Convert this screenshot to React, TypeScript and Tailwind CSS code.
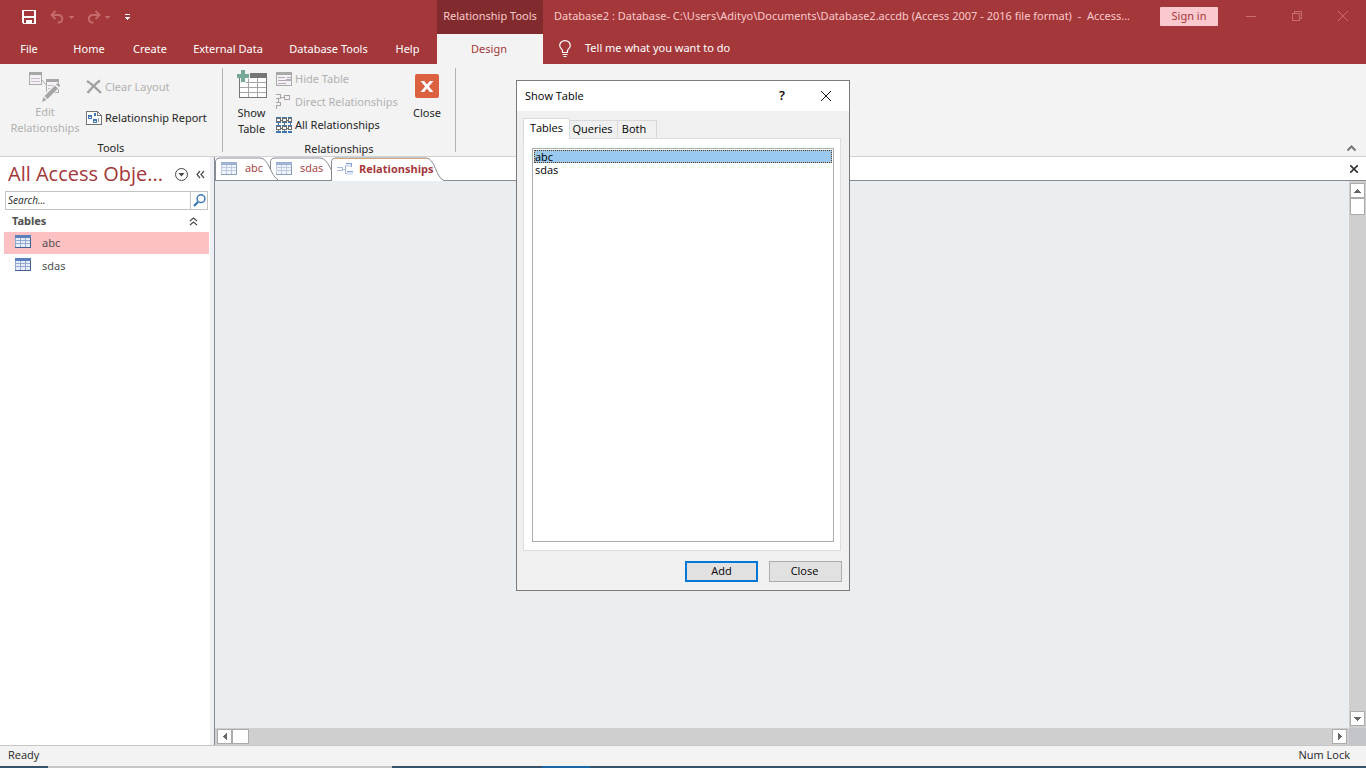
import React, { useState } from 'react';
import { clsx } from 'clsx';

const MENU = [
  { label: 'File', width: 'w-[58px]' },
  { label: 'Home', width: 'w-[62px]' },
  { label: 'Create', width: 'w-[60px]' },
  { label: 'External Data', width: 'w-[96px]' },
  { label: 'Database Tools', width: 'w-[105px]' },
  { label: 'Help', width: 'w-[53px]' },
];

const OBJECTS = ['abc', 'sdas'];

/* ---------- icons ---------- */

function SaveIcon() {
  return (
    <svg width="14" height="14" viewBox="0 0 14 14" shapeRendering="crispEdges">
      <path fillRule="evenodd" fill="#fff" d="M0 0h14v14H1l-1-1zM2 1v5h10V1zM2 8v5h2v-3h6v3h2V8z" />
      <path d="M6 12h2v2H6z" fill="#fff" />
    </svg>
  );
}

function UndoIcon({ flip = false }: { flip?: boolean }) {
  return (
    <svg width="15" height="14" viewBox="0 0 15 14" fill="none" stroke="#c4686b" strokeWidth="2" className={clsx(flip && '-scale-x-100')}>
      <path d="M5.500 1L1.500 5l4 4M2 5h7a3.800 3.800 0 0 1 0 7.500H7.500" />
    </svg>
  );
}

function Caret({ color = '#c4686b' }: { color?: string }) {
  return (
    <svg width="5" height="3" viewBox="0 0 5 3" fill={color} shapeRendering="crispEdges">
      <path d="M0 0h5v1H4v1H3v1H2V2H1V1H0z" />
    </svg>
  );
}

function BulbIcon() {
  return (
    <svg width="12" height="17" viewBox="0 0 12 17" fill="none" stroke="#fff">
      <path d="M3.500 12.500V10.500C3 9 .7 8 .7 5.500a5.300 4.900 0 0 1 10.600 0c0 2.500-2.300 3.500-2.800 5v2z" strokeWidth="1.200" />
      <path d="M3.500 14.500h5M4.500 16.500h3" />
    </svg>
  );
}

function EditRelationshipsIcon() {
  return (
    <svg width="32" height="32" viewBox="0 0 32 32" shapeRendering="crispEdges">
      <path d="M.5 1.500h12v11H.5zM17.500 8.500h12v12h-12z" fill="#f5f0f5" stroke="#ababab" />
      <path d="M0 0h13v3H0zM17 7h13v3H17z" fill="#a6a6a6" />
      <path d="M2 6h9M2 9h9M19 13h7M19 16h4" stroke="#c8bcc8" />
      <path d="M13 8l5 6" stroke="#a6a6a6" shapeRendering="auto" />
      <g shapeRendering="auto">
        <path d="M12 30l2-7L27 11l5 4-13 12z" fill="#f2f2f2" />
        <path d="M13 30l1.500-5 3 3zM15.500 24L26 13.500l3 3L18.500 27zM27 12.500l1-1q2-.5 3 1.500v1l-1 1z" fill="#a6a6a6" />
      </g>
    </svg>
  );
}

function ClearIcon() {
  return (
    <svg width="16" height="16" viewBox="0 0 16 16" fill="none" stroke="#a3a3a3" strokeWidth="2.400">
      <path d="M1 2c5 3 9 7 14 12M14 1.500C9 5 5 10 1.500 14" />
    </svg>
  );
}

function ReportIcon() {
  return (
    <svg width="16" height="14" viewBox="0 0 16 14" shapeRendering="crispEdges">
      <path d="M.5.5h11l4 4v9H.5z" fill="#fff" stroke="#737373" />
      <path d="M11.500.5v4h4" fill="none" stroke="#737373" />
      <path d="M2.500 4.500h3v3h-3zM7.500 8.500h3v3h-3z" fill="none" stroke="#3f77b5" />
      <path d="M2 4h4v2H2zM7 8h4v2H7zM8 2h2v3H8z" fill="#3f77b5" />
      <path d="M12.500 7v4" stroke="#9a9a9a" />
    </svg>
  );
}

function ShowTableIcon() {
  return (
    <svg width="30" height="29" viewBox="0 0 30 29" shapeRendering="crispEdges">
      <path d="M2.500 4.500h27v23h-27z" fill="#fff" stroke="#767676" />
      <path d="M12 3h18v5H12z" fill="#767676" />
      <path d="M3 12.500h26M3 17.500h26M3 22.500h26M11.500 8v19M20.500 8v19" stroke="#a5a5a5" />
      <path d="M3 0h6v3h4v6H9v4H3z" fill="#f2f2f2" />
      <path d="M4 0h4v4h4v4H8v4H4V8H0V4h4z" fill="#76a797" />
    </svg>
  );
}

function HideTableIcon() {
  return (
    <svg width="16" height="14" viewBox="0 0 16 14" shapeRendering="crispEdges">
      <path d="M.5.5h15v13H.5z" fill="#f5f0f5" stroke="#a9a9a9" />
      <path d="M0 0h16v3H0z" fill="#a9a9a9" />
      <path d="M2 5.500h7M2 8.500h9M2 11.500h8M11 5.500h5" stroke="#b4a9b4" />
      <path d="M10 7h6v2h-6z" fill="#b0b0b0" />
    </svg>
  );
}

function DirectIcon() {
  return (
    <svg width="15" height="15" viewBox="0 0 15 15" fill="none" stroke="#aaa4aa" shapeRendering="crispEdges">
      <path d="M0 .5h5M4.500 0v4M0 4.500h5M8.500 1.500h5v4h-5zM5 3.500h3M0 8.500h5M4.500 8v4M0 11.500h5M.5 11v4M2.500 5v3" />
    </svg>
  );
}

function AllRelationshipsIcon() {
  return (
    <svg width="16" height="16" viewBox="0 0 16 16" fill="none" shapeRendering="crispEdges">
      <path d="M.5 1.500h4v3h-4zM6.500 1.500h4v3h-4zM12.500 1.500h3v3h-3zM.5 9.500h4v3h-4zM6.500 9.500h4v3h-4zM12.500 9.500h3v3h-3z" fill="#fff" stroke="#6e6e6e" />
      <path d="M5 3.500h1M11 3.500h1M5 11.500h1M11 11.500h1M2.500 5v4M8.500 5v4M14.500 5v4M2.500 13v3M8.500 13v3" stroke="#6e6e6e" />
      <path d="M0 0h5v1H0zM6 0h5v1H6zM12 0h4v1h-4zM0 5h5v1H0zM6 5h5v1H6zM12 5h4v1h-4zM0 8h5v1H0zM6 8h5v1H6zM12 8h4v1h-4zM0 14h5v2H0zM6 14h5v2H6zM12 14h4v2h-4z" fill="#3f77b5" />
    </svg>
  );
}

function CloseDesignIcon() {
  return (
    <svg width="24" height="24" viewBox="0 0 24 24">
      <rect width="24" height="24" rx="2" fill="#dc6141" />
      <path d="M5.500 7h3.700l2.800 3.500L14.800 7h3.700l-4.600 5.500 4.600 5.500h-3.700L12 14.500 9.200 18H5.500l4.600-5.500z" fill="#fff" />
    </svg>
  );
}

function TableIcon({ faded = false }: { faded?: boolean }) {
  return (
    <svg width="16" height="13" viewBox="0 0 16 13" shapeRendering="crispEdges" className={clsx(faded && 'opacity-60')}>
      <path d="M0 0h16v13H0z" fill="#41608f" />
      <path d="M0 0h15v12H0z" fill="#93a9d0" />
      <path d="M0 0h16v3H0z" fill="#5b80bb" />
      <path d="M1 3h4v2H1zM6 3h4v2H6zM11 3h4v2h-4zM1 6h4v2H1zM6 6h4v2H6zM11 6h4v2h-4zM1 9h4v3H1zM6 9h4v3H6zM11 9h4v3h-4z" fill="#e6edf9" />
    </svg>
  );
}

function RelationshipsIcon() {
  return (
    <svg width="16" height="14" viewBox="0 0 16 14" fill="none" shapeRendering="crispEdges">
      <path d="M0 5.500h5v3H0M5 7h3M8 3v8M8 3.500h2M8 11.500h2" stroke="#a9bce0" />
      <path d="M9 1h6v4H9zM10 9h6v4h-6z" fill="#dbe5f7" />
      <path d="M9 1h6v1H9zM10 9h6v1h-6zM14 1h1v4h-1z" fill="#86a2d6" />
    </svg>
  );
}

function DoubleChevron({ up = false }: { up?: boolean }) {
  return (
    <svg width="9" height="9" viewBox="0 0 9 9" fill="none" stroke="#4a4a4a" strokeWidth="1.200" className={clsx(up && 'rotate-90')}>
      <path d="M4 1L1 4.500 4 8M8 1L5 4.500 8 8" />
    </svg>
  );
}

function Cross({ size, color, weight = 1 }: { size: number; color: string; weight?: number }) {
  return (
    <svg width={size} height={size} viewBox="0 0 10 10" fill="none" stroke={color} strokeWidth={weight}>
      <path d="M0 0l10 10M10 0L0 10" />
    </svg>
  );
}

/* ---------- header ---------- */

function Header() {
  return (
    <header className="flex h-16 shrink-0 bg-[#a4373a] text-[11px] text-white">
      <div className="flex w-[437px] shrink-0 flex-col">
        <div className="flex h-[34px] items-center pl-[22px]">
          <button aria-label="Save"><SaveIcon /></button>
          <button aria-label="Undo" className="ml-[14px] flex items-center gap-1"><UndoIcon /><Caret /></button>
          <button aria-label="Redo" className="ml-3 flex items-center gap-1"><UndoIcon flip /><Caret /></button>
          <button aria-label="Customize" className="ml-[15px] flex flex-col gap-0.5">
            <span className="h-px w-[5px] bg-white" />
            <Caret color="#fff" />
          </button>
        </div>
        <nav className="flex h-[30px]">
          {MENU.map((m) => (
            <button key={m.label} className={clsx('shrink-0 whitespace-nowrap text-center', m.width)}>
              {m.label}
            </button>
          ))}
        </nav>
      </div>
      <div className="flex w-[106px] shrink-0 flex-col text-center">
        <div className="h-[34px] whitespace-nowrap bg-[#822b2e] leading-8 text-[#fbcaca]">Relationship Tools</div>
        <button className="h-[30px] bg-[#f3f3f3] pr-0.5 text-[#a4373a]">Design</button>
      </div>
      <div className="flex min-w-0 flex-1 flex-col">
        <div className="flex h-8 items-center pl-[11px] text-[#fbcaca]">
          <h1 className="w-[592px] shrink-0 whitespace-pre">
            Database2 : Database- C:\Users\Adityo\Documents\Database2.accdb (Access 2007 - 2016 file format)  -  Access...
          </h1>
          <div className="ml-auto flex items-center pr-[18px]">
            <button className="mr-7 h-[19px] w-[58px] rounded-[1px] bg-[#fac8cd] text-[#a4373a]">Sign in</button>
            <button aria-label="Minimize" className="h-px w-[10px] bg-[#c96c70]" />
            <button aria-label="Restore" className="ml-9">
              <svg width="10" height="10" viewBox="0 0 10 10" fill="none" stroke="#c96c70" shapeRendering="crispEdges">
                <path d="M.5 2.500h7v7h-7zM2.500 2V.5h7v7H8" />
              </svg>
            </button>
            <button aria-label="Close window" className="ml-9"><Cross size={10} color="#c96c70" /></button>
          </div>
        </div>
        <button className="flex h-8 items-center gap-[14px] pl-4">
          <BulbIcon />
          Tell me what you want to do
        </button>
      </div>
    </header>
  );
}

/* ---------- ribbon ---------- */

function SmallCommand({ icon, label, disabled = false }: { icon: React.ReactNode; label: string; disabled?: boolean }) {
  return (
    <button disabled={disabled} className={clsx('flex h-[23px] items-center gap-[3px] whitespace-nowrap', disabled ? 'text-[#b1b1b1]' : 'text-[#262626]')}>
      <span className="flex w-4">{icon}</span>
      {label}
    </button>
  );
}

function Ribbon() {
  return (
    <section className="flex h-[93px] shrink-0 border-b border-[#d2d2d2] bg-[#f3f3f3] text-[11px] leading-4 text-[#262626]">
      <div className="my-1 flex w-[223px] shrink-0 flex-col border-r border-[#b2b2b2]">
        <div className="flex h-[72px]">
          <button disabled className="flex w-[76px] flex-col items-center pl-[14px] pt-1 text-[#b1b1b1]">
            <EditRelationshipsIcon />
            <span>Edit</span>
            <span>Relationships</span>
          </button>
          <div className="flex flex-col gap-2 pl-[10px] pt-[7px]">
            <SmallCommand disabled icon={<ClearIcon />} label="Clear Layout" />
            <SmallCommand icon={<ReportIcon />} label="Relationship Report" />
          </div>
        </div>
        <p className="pt-1 text-center">Tools</p>
      </div>
      <div className="my-1 flex w-[233px] shrink-0 flex-col border-r border-[#b2b2b2]">
        <div className="-mt-px flex h-[72px]">
          <button className="flex w-[53px] flex-col items-center pl-1 pt-[3px]">
            <ShowTableIcon />
            <span className="pt-1.5">Show</span>
            <span>Table</span>
          </button>
          <div className="flex w-[129px] flex-col">
            <SmallCommand disabled icon={<HideTableIcon />} label="Hide Table" />
            <SmallCommand disabled icon={<DirectIcon />} label="Direct Relationships" />
            <SmallCommand icon={<AllRelationshipsIcon />} label="All Relationships" />
          </div>
          <button className="flex w-11 flex-col items-center gap-[7px] pt-[7px]">
            <CloseDesignIcon />
            Close
          </button>
        </div>
        <p className="pt-1 text-center">Relationships</p>
      </div>
      <button aria-label="Collapse the ribbon" className="ml-auto flex items-end pb-1 pr-[10px]">
        <svg width="9" height="7" viewBox="0 0 9 7" fill="none" stroke="#777" strokeWidth="2">
          <path d="M.5 5.500l4-4 4 4" />
        </svg>
      </button>
    </section>
  );
}

/* ---------- navigation pane ---------- */

function NavigationPane() {
  return (
    <aside className="flex w-[215px] shrink-0 border-r border-[#868b94] bg-[#eef0f3]">
      <div className="w-[210px] bg-white">
        <div className="flex h-[34px] items-center pl-2 text-[#a4373a]">
          <h2 className="w-[167px] whitespace-nowrap font-['Open_Sans',sans-serif] text-xl">All Access Obje...</h2>
          <button aria-label="Choose group">
            <svg width="13" height="13" viewBox="0 0 13 13">
              <circle cx="6.500" cy="6.500" r="6" fill="#fff" stroke="#444" />
              <path d="M3.500 5h6l-3 3.500z" fill="#444" />
            </svg>
          </button>
          <button aria-label="Hide pane" className="ml-2"><DoubleChevron /></button>
        </div>
        <div className="ml-[5px] flex h-[19px] w-[203px] border border-[#c3c3c3]">
          <input aria-label="Search" placeholder="Search..." className="min-w-0 flex-1 px-0.5 font-['Open_Sans',sans-serif] text-[10px] italic outline-none placeholder:text-[#262626]" />
          <button aria-label="Find" className="flex w-[17px] items-center justify-center border-l border-[#c3c3c3]">
            <svg width="13" height="13" viewBox="0 0 13 13" fill="none" stroke="#3f77b5">
              <circle cx="8" cy="4.700" r="3.900" strokeWidth="1.500" />
              <path d="M5 8L1 12" strokeWidth="2.400" />
            </svg>
          </button>
        </div>
        <button className="flex h-[22px] w-full items-center justify-between pl-3 pr-3 text-[11px] font-bold text-[#505050]">
          Tables
          <DoubleChevron up />
        </button>
        <ul className="flex flex-col gap-px pl-1 pr-px">
          {OBJECTS.map((name, i) => (
            <li key={name}>
              <button className={clsx('flex h-[22px] w-full items-center gap-[11px] pl-[11px] text-[11px] text-[#505050]', i === 0 && 'bg-[#fdc1c3]')}>
                <span className="pb-1"><TableIcon /></span>
                {name}
              </button>
            </li>
          ))}
        </ul>
      </div>
    </aside>
  );
}

/* ---------- document area ---------- */

function DocTab({ label, active = false, first = false }: { label: string; active?: boolean; first?: boolean }) {
  if (active) {
    return (
      <button className="relative z-20 flex h-6 w-[114px] items-center gap-1.5 pl-1.5 font-bold">
        <svg className="absolute left-0 top-0" width="114" height="24" viewBox="0 0 114 24" fill="#fff">
          <path d="M0 24V5Q0 0 5 0h90c9 0 10 20 18 23.500v.5z" />
          <path d="M.5 24V5Q.5 1 5 1h90c9 0 10 20 18 22.500" fill="none" stroke="#868b94" />
          <path d="M3 1.500h93" stroke="#d3a77b" />
        </svg>
        <span className="relative"><RelationshipsIcon /></span>
        <span className="relative">{label}</span>
      </button>
    );
  }
  return (
    <button className={clsx('relative flex h-[23px] items-center gap-2 pl-1.5', first ? 'z-10 w-[55px]' : 'w-[61px]')}>
      {first ? (
        <svg className="absolute left-0 top-0" width="64" height="23" viewBox="0 0 64 23" fill="#fff">
          <path d="M.5 23V5Q.5 1 5 1h40c9 0 10 17 18 22" stroke="#868b94" />
        </svg>
      ) : (
        <svg className="absolute left-0 top-0" width="72" height="23" viewBox="0 0 72 23" fill="#fff">
          <path d="M.5 23V5Q.5 1 5 1h45c9 0 11 17 19 22" stroke="#868b94" />
        </svg>
      )}
      <span className="relative"><TableIcon faded /></span>
      <span className="relative">{label}</span>
    </button>
  );
}

const scrollPart = 'flex items-center justify-center border border-[#ababab] bg-white';

function Arrow({ d }: { d: string }) {
  return (
    <svg width="7" height="7" viewBox="0 0 7 7" fill="#666" shapeRendering="crispEdges">
      <path d={d} />
    </svg>
  );
}

function DocumentArea() {
  return (
    <main className="flex min-w-0 flex-1 flex-col">
      <div className="flex h-6 shrink-0 items-start border-b border-[#868b94] bg-white font-['Open_Sans',sans-serif] text-[11px] text-[#a4373a]">
        <DocTab label="abc" first />
        <DocTab label="sdas" />
        <DocTab label="Relationships" active />
        <button aria-label="Close document" className="ml-auto mr-2 flex h-[23px] items-center"><Cross size={8} color="#333" weight={2} /></button>
      </div>
      <div className="flex min-h-0 flex-1 bg-[#eaeef1]">
        <div className="flex-1" />
        <div className="flex w-[17px] flex-col bg-[#cfcfcf] px-px py-0.5">
          <button aria-label="Scroll up" className={clsx(scrollPart, 'h-[15px]')}><Arrow d="M3 2h1v1h1v1h1v1h1v1H0V5h1V4h1V3h1z" /></button>
          <div className={clsx(scrollPart, 'h-[17px]')} />
          <button aria-label="Scroll down" className={clsx(scrollPart, 'mt-auto h-[15px]')}><Arrow d="M0 2h7v1H6v1H5v1H4v1H3V5H2V4H1V3H0z" /></button>
        </div>
      </div>
      <div className="flex h-[17px] shrink-0 bg-[#cfcfcf]">
        <div className="flex flex-1 px-0.5 py-px">
          <button aria-label="Scroll left" className={clsx(scrollPart, 'w-[15px]')}><Arrow d="M2 3h1V2h1V1h1V0h1v7H5V6H4V5H3V4H2z" /></button>
          <div className={clsx(scrollPart, 'w-[17px]')} />
          <button aria-label="Scroll right" className={clsx(scrollPart, 'ml-auto w-[15px]')}><Arrow d="M2 0h1v1h1v1h1v1h1v1H5v1H4v1H3v1H2z" /></button>
        </div>
        <div className="w-[17px] bg-[#c4c5ca]" />
      </div>
    </main>
  );
}

/* ---------- Show Table dialog ---------- */

const DIALOG_TABS = ['Tables', 'Queries', 'Both'];

function ShowTableDialog() {
  const [tab, setTab] = useState('Tables');
  const [selected, setSelected] = useState('abc');

  return (
    <div role="dialog" aria-label="Show Table" className="absolute left-1/2 top-20 z-50 flex h-[511px] w-[334px] -translate-x-1/2 flex-col border border-[#7a7a7a] bg-[#f0f0f0] font-['Open_Sans',sans-serif] text-[11px] text-black">
      <div className="flex h-[30px] items-center bg-white pl-2 pr-[18px]">
        <h2>Show Table</h2>
        <button aria-label="Help" className="ml-auto text-[13px] font-semibold">?</button>
        <button aria-label="Close dialog" className="ml-9"><Cross size={10} color="#111" /></button>
      </div>
      <div role="tablist" className="flex h-[27px] items-end pl-1.5">
        {DIALOG_TABS.map((t) => (
          <button
            key={t}
            role="tab"
            aria-selected={tab === t}
            onClick={() => setTab(t)}
            className={clsx(
              'border border-b-0 border-[#d9d9d9]',
              tab === t ? 'relative z-10 -mb-px h-[21px] w-[47px] bg-white pb-0.5' : 'h-[18px] border-l-0',
              t === 'Queries' && 'w-12 pr-0.5',
              t === 'Both' && 'w-[39px] pr-1.5'
            )}>
            {t}
          </button>
        ))}
      </div>
      <div className="ml-1.5 mr-2 flex h-[413px] border border-[#dcdcdc] bg-white px-2 pb-2 pt-[9px]">
        <ul role="listbox" aria-label="Tables" className="mr-[-2px] flex-1 border border-[#abadb3] p-px leading-[13px]">
          {OBJECTS.map((name) => (
            <li
              key={name}
              role="option"
              aria-selected={selected === name}
              onClick={() => setSelected(name)}
              className={clsx('h-[13px] px-px', selected === name && 'bg-[#99c9ef] outline-1 -outline-offset-1 outline-dotted outline-[#663610]')}>
              {name}
            </li>
          ))}
        </ul>
      </div>
      <div className="flex justify-end gap-[11px] pr-[7px] pt-[10px]">
        <button className="h-[21px] w-[73px] border-2 border-[#0078d7] bg-[#e1e1e1]">Add</button>
        <button className="h-[21px] w-[73px] border border-[#adadad] bg-[#e1e1e1] pr-0.5">Close</button>
      </div>
    </div>
  );
}

export default function App() {
  return (
    <div className="relative flex h-screen flex-col overflow-hidden bg-white font-['Noto_Sans',sans-serif]">
      <Header />
      <Ribbon />
      <div className="flex min-h-0 flex-1">
        <NavigationPane />
        <DocumentArea />
      </div>
      <footer className="flex h-[21px] shrink-0 items-center justify-between border-t border-[#c6c6c6] bg-[#f3f3f3] pb-0.5 pl-2 pr-4 font-['Open_Sans',sans-serif] text-[11px] text-[#262626]">
        <span>Ready</span>
        <span>Num Lock</span>
      </footer>
      <div className="flex h-0.5 shrink-0 bg-[#35536b]">
        <div className="ml-12 w-[344px] bg-[#c6c6c6]" />
        <div className="ml-[150px] w-12 bg-[#1b67a8]" />
      </div>
      <ShowTableDialog />
    </div>
  );
}
